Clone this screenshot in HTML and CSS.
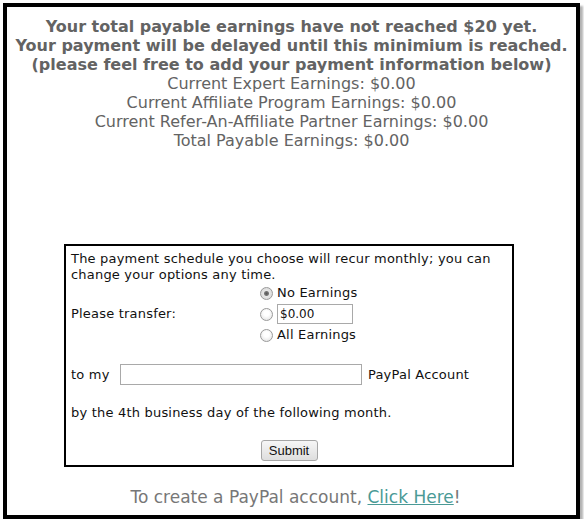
FILE: index.html
```html
<!DOCTYPE html>
<html lang="en">
<head>
  <meta charset="UTF-8" />
  <title>Payment Information</title>
  <link rel="stylesheet" href="styles.css">
</head>
<body>
  <div class="frame">
    <div class="summary">
      <p class="notice">Your total payable earnings have not reached $20 yet.</p>
      <p class="notice">Your payment will be delayed until this minimium is reached.</p>
      <p class="notice">(please feel free to add your payment information below)</p>
      <p>Current Expert Earnings: $0.00</p>
      <p>Current Affiliate Program Earnings: $0.00</p>
      <p>Current Refer-An-Affiliate Partner Earnings: $0.00</p>
      <p>Total Payable Earnings: $0.00</p>
    </div>

    <form class="payment-box">
      <p class="intro">The payment schedule you choose will recur monthly; you can change your options any time.</p>

      <div class="transfer">
        <span>Please transfer:</span>
        <div class="options">
          <label class="option"><input type="radio" name="amount" checked /> No Earnings</label>
          <label class="option"><input type="radio" name="amount" /> <input type="text" class="amount" value="$0.00" /></label>
          <label class="option"><input type="radio" name="amount" /> All Earnings</label>
        </div>
      </div>

      <div class="account">
        <span class="to-my">to my</span>
        <input type="text" class="paypal" />
        <span>PayPal Account</span>
      </div>

      <p class="deadline">by the 4th business day of the following month.</p>

      <div class="actions">
        <button type="submit">Submit</button>
      </div>
    </form>

    <p class="create">To create a PayPal account, <a href="#">Click Here</a>!</p>
  </div>
</body>
</html>
```

FILE: styles.css
```css
* {
  box-sizing: border-box;
  margin: 0;
  padding: 0;
}

body {
  background: #fff;
}

.frame {
  width: 577px;
  height: 516px;
  margin: 3px 0 0 3px;
  border: 4px solid #000;
  box-shadow: 3px 3px 2px rgba(0, 0, 0, 0.3);
  background: #fff;
}

.summary {
  padding-top: 10px;
  text-align: center;
  color: #636363;
  font-family: 'DejaVu Sans', Verdana, sans-serif;
  font-size: 16px;
  line-height: 19px;
}

.summary .notice {
  font-weight: bold;
}

.payment-box {
  width: 450px;
  margin: 94px 0 0 57px;
  border: 2px solid #000;
  padding: 5px 5px 4px 5px;
  font-family: 'DejaVu Sans', Verdana, sans-serif;
  font-size: 13px;
  letter-spacing: 0.2px;
  line-height: 16px;
  color: #111;
}

.transfer {
  display: grid;
  grid-template-columns: 189px auto;
  align-items: center;
}

.options {
  display: flex;
  flex-direction: column;
  gap: 1px;
}

.option {
  display: flex;
  align-items: center;
  gap: 4px;
  height: 20px;
}

.option input[type="radio"] {
  appearance: none;
  width: 13px;
  height: 13px;
  border: 1px solid #9a9a9a;
  border-radius: 50%;
  background: radial-gradient(circle at 50% 40%, #fff 30%, #dcdcdc 100%);
}

.option input[type="radio"]:checked {
  background: radial-gradient(circle, #555 0, #777 2px, #e6e6e6 3px, #d4d4d4 100%);
}

.amount {
  width: 76px;
  height: 20px;
  border: 1px solid #a9a9a9;
  padding: 0 2px;
  font-family: 'DejaVu Sans', Verdana, sans-serif;
  font-size: 12px;
  color: #111;
}

.account {
  display: flex;
  align-items: center;
  margin-top: 19px;
  height: 21px;
}

.to-my {
  width: 49px;
}

.paypal {
  width: 242px;
  height: 21px;
  margin-right: 6px;
  border: 1px solid #a9a9a9;
}

.deadline {
  margin-top: 20px;
}

.actions {
  display: flex;
  justify-content: center;
  margin-top: 19px;
}

.actions button {
  width: 57px;
  height: 21px;
  font-family: 'Liberation Sans', Arial, sans-serif;
  font-size: 13px;
  letter-spacing: 0;
  color: #111;
  border: 1px solid #a6a6a6;
  border-radius: 3px;
  background: linear-gradient(#f6f6f6, #dedede);
}

.create {
  margin-top: 21px;
  padding-left: 8px;
  text-align: center;
  color: #777;
  font-family: 'DejaVu Sans', Verdana, sans-serif;
  font-size: 17px;
  line-height: 19px;
}

.create a {
  color: #4a9a96;
}
```
